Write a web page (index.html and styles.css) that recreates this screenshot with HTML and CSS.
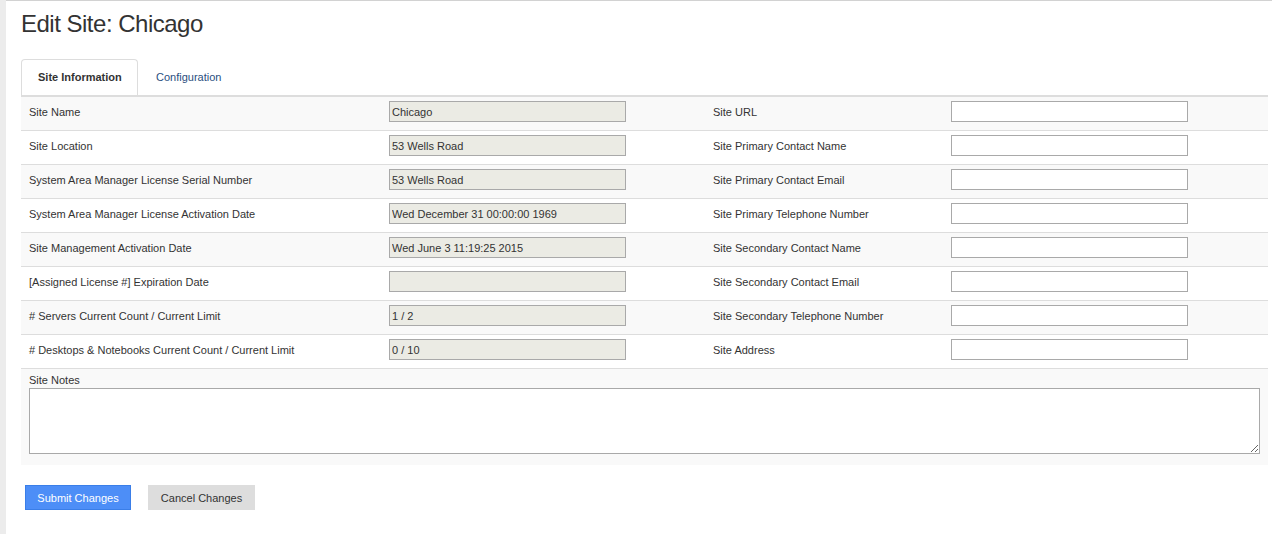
FILE: index.html
```html
<!DOCTYPE html>
<html>
<head>
<meta charset="utf-8">
<title>Edit Site: Chicago</title>
<link rel="stylesheet" href="styles.css">
</head>
<body>
<div class="page">
  <div class="sidebar"></div>
  <div class="main">
    <h1 class="title">Edit Site: Chicago</h1>
    <div class="tabs">
      <div class="tab active">Site Information</div>
      <div class="tab">Configuration</div>
    </div>
    <table class="grid">
      <colgroup>
        <col class="c1"><col class="c2"><col class="c3"><col class="c4">
      </colgroup>
      <tbody>
        <tr class="odd">
          <td>Site Name</td>
          <td><input class="field ro" type="text" value="Chicago" readonly></td>
          <td>Site URL</td>
          <td><input class="field" type="text"></td>
        </tr>
        <tr>
          <td>Site Location</td>
          <td><input class="field ro" type="text" value="53 Wells Road" readonly></td>
          <td>Site Primary Contact Name</td>
          <td><input class="field" type="text"></td>
        </tr>
        <tr class="odd">
          <td>System Area Manager License Serial Number</td>
          <td><input class="field ro" type="text" value="53 Wells Road" readonly></td>
          <td>Site Primary Contact Email</td>
          <td><input class="field" type="text"></td>
        </tr>
        <tr>
          <td>System Area Manager License Activation Date</td>
          <td><input class="field ro" type="text" value="Wed December 31 00:00:00 1969" readonly></td>
          <td>Site Primary Telephone Number</td>
          <td><input class="field" type="text"></td>
        </tr>
        <tr class="odd">
          <td>Site Management Activation Date</td>
          <td><input class="field ro" type="text" value="Wed June 3 11:19:25 2015" readonly></td>
          <td>Site Secondary Contact Name</td>
          <td><input class="field" type="text"></td>
        </tr>
        <tr>
          <td>[Assigned License #] Expiration Date</td>
          <td><input class="field ro" type="text" value="" readonly></td>
          <td>Site Secondary Contact Email</td>
          <td><input class="field" type="text"></td>
        </tr>
        <tr class="odd">
          <td># Servers Current Count / Current Limit</td>
          <td><input class="field ro" type="text" value="1 / 2" readonly></td>
          <td>Site Secondary Telephone Number</td>
          <td><input class="field" type="text"></td>
        </tr>
        <tr>
          <td># Desktops &amp; Notebooks Current Count / Current Limit</td>
          <td><input class="field ro" type="text" value="0 / 10" readonly></td>
          <td>Site Address</td>
          <td><input class="field" type="text"></td>
        </tr>
        <tr class="odd notes-row">
          <td colspan="4">
            <div class="notes-label">Site Notes</div>
            <textarea class="notes"></textarea>
          </td>
        </tr>
      </tbody>
    </table>
    <div class="actions">
      <button class="btn primary" type="button">Submit Changes</button>
      <button class="btn secondary" type="button">Cancel Changes</button>
    </div>
  </div>
</div>
</body>
</html>
```
FILE: styles.css
```css
html, body {
  margin: 0;
  padding: 0;
  background: #ffffff;
  font-family: "Liberation Sans", Arial, sans-serif;
  color: #333333;
}

.page {
  display: flex;
  min-height: 534px;
}

.sidebar {
  width: 6px;
  flex: none;
  background: #ececec;
}

.main {
  flex: 1;
  border-top: 1px solid #d2d2d2;
  padding-left: 15px;
  padding-right: 4px;
}

.title {
  margin: 0;
  padding-top: 9px;
  font-size: 24px;
  line-height: 28px;
  font-weight: normal;
  letter-spacing: -0.5px;
  color: #333333;
}

.tabs {
  display: flex;
  margin-top: 21px;
  height: 36px;
}

.tab {
  display: flex;
  align-items: center;
  font-size: 11px;
  color: #2a4f80;
  padding: 0 17px 0 17px;
  border: 1px solid transparent;
  border-bottom: none;
  border-radius: 4px 4px 0 0;
  padding-bottom: 2px;
}

.tab.active {
  color: #333333;
  font-weight: bold;
  border-color: #dddddd;
  padding: 0 15px 2px 16px;
  width: 84px;
}

.grid {
  width: 1247px;
  border-collapse: collapse;
  table-layout: fixed;
  border-top: 2px solid #dddddd;
  font-size: 11px;
}

.c1 { width: 360px; }
.c2 { width: 324px; }
.c3 { width: 238px; }
.c4 { width: 325px; }

.grid td {
  padding: 4px 8px 8px 8px;
  border-top: 1px solid #dddddd;
  vertical-align: middle;
  line-height: 14px;
  color: #333333;
}

.grid tr:first-child td {
  border-top: none;
}

.grid tr.odd td {
  background: #f9f9f9;
}

.field {
  box-sizing: border-box;
  width: 237px;
  height: 21px;
  margin: 0;
  padding: 0 2px;
  border: 1px solid #a9a9a9;
  background: #ffffff;
  font-family: "Liberation Sans", Arial, sans-serif;
  font-size: 11px;
  color: #333333;
  display: block;
  outline: none;
}

.field.ro {
  background: #ebebe4;
}

.notes-row td {
  padding: 4px 8px 11px 8px;
}

.notes-label {
  line-height: 14px;
  margin-bottom: 1px;
}

.notes {
  box-sizing: border-box;
  display: block;
  width: 1231px;
  height: 66px;
  margin: 0;
  border: 1px solid #a9a9a9;
  background: #ffffff;
  resize: vertical;
}

.actions {
  display: flex;
  gap: 17px;
  margin-top: 20px;
  padding-left: 4px;
}

.btn {
  box-sizing: border-box;
  height: 25px;
  margin: 0;
  padding: 0;
  white-space: nowrap;
  font-family: "Liberation Sans", Arial, sans-serif;
  font-size: 11px;
  cursor: pointer;
}

.btn.primary {
  width: 106px;
  background: #4d8ef7;
  border: 1px solid #3a7ee8;
  color: #ffffff;
}

.btn.secondary {
  width: 107px;
  background: #dddddd;
  border: 1px solid #dddddd;
  color: #333333;
}
```
